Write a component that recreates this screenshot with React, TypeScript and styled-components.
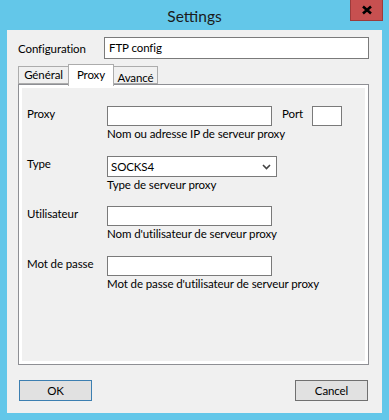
import styled, { createGlobalStyle } from 'styled-components'

const GlobalStyle = createGlobalStyle`
	html, body {
		margin: 0;
		padding: 0;
		background: #63c7e9;
	}
	* {
		box-sizing: border-box;
	}
`

const fields = [
	{ label: 'Proxy', hint: 'Nom ou adresse IP de serveur proxy', kind: 'proxy' },
	{ label: 'Type', hint: 'Type de serveur proxy', kind: 'select' },
	{ label: 'Utilisateur', hint: "Nom d'utilisateur de serveur proxy", kind: 'text' },
	{ label: 'Mot de passe', hint: "Mot de passe d'utilisateur de serveur proxy", kind: 'text' },
]

function App() {
	return (
		<>
			<GlobalStyle />
			<Window>
				<TitleBar>
					<span />
					<Title>Settings</Title>
					<CloseButton>
						<svg width="12" height="10" viewBox="0 0 12 10">
							<path d="M2 1.5 L10 8.5 M10 1.5 L2 8.5" stroke="#000" strokeWidth="2.6" />
						</svg>
					</CloseButton>
				</TitleBar>
				<Client>
					<ConfigRow>
						<Label>Configuration</Label>
						<ConfigInput>FTP config</ConfigInput>
					</ConfigRow>
					<TabStrip>
						<Tab $width={51}>Général</Tab>
						<Tab $width={46} $active>Proxy</Tab>
						<Tab $width={45} $drop>Avancé</Tab>
					</TabStrip>
					<Panel>
						{fields.map((f) => (
							<FieldRow key={f.label}>
								<FieldLabel>{f.label}</FieldLabel>
								<FieldBody>
									{f.kind === 'proxy' && (
										<InlineRow>
											<TextBox />
											<PortLabel>Port</PortLabel>
											<PortBox />
										</InlineRow>
									)}
									{f.kind === 'select' && (
										<SelectBox>
											<span>SOCKS4</span>
											<svg width="9" height="6" viewBox="0 0 9 6">
												<path d="M1 1 L4.5 4.5 L8 1" fill="none" stroke="#444" strokeWidth="1.6" />
											</svg>
										</SelectBox>
									)}
									{f.kind === 'text' && <TextBox />}
									<Hint>{f.hint}</Hint>
								</FieldBody>
							</FieldRow>
						))}
					</Panel>
					<ButtonRow>
						<Button $default>OK</Button>
						<Button>Cancel</Button>
					</ButtonRow>
				</Client>
			</Window>
		</>
	)
}

const Window = styled.div`
	width: 389px;
	height: 420px;
	display: flex;
	flex-direction: column;
	background: #63c7e9;
	font-family: Lato, 'Noto Sans', sans-serif;
	font-size: 11.5px;
	letter-spacing: -0.1px;
	color: #000;
`

const TitleBar = styled.div`
	height: 30px;
	display: grid;
	grid-template-columns: 1fr auto 1fr;
`

const Title = styled.div`
	align-self: center;
	font-size: 15.5px;
	letter-spacing: 0;
	color: #1b1b1b;
	padding-top: 1px;
`

const CloseButton = styled.div`
	justify-self: end;
	align-self: start;
	width: 33px;
	height: 21px;
	margin-right: 6px;
	background: #c75050;
	border: 1px solid #9c3b3b;
	border-top: none;
	display: grid;
	place-items: center;
`

const Client = styled.div`
	flex: 1;
	margin: 0 7px 7px 7px;
	background: #f0f0f0;
	padding: 7px 13px 0 11px;
	display: flex;
	flex-direction: column;
`

const ConfigRow = styled.div`
	display: grid;
	grid-template-columns: 86px 1fr;
	align-items: center;
	height: 22px;
`

const Label = styled.span`
	line-height: 15px;
`

const ConfigInput = styled.div`
	height: 22px;
	background: #fff;
	border: 1px solid #7a7a7a;
	padding: 0 4px;
	line-height: 20px;
`

const TabStrip = styled.div`
	margin-top: 5px;
	height: 20px;
	display: flex;
	align-items: flex-end;
	position: relative;
	z-index: 1;
`

const Tab = styled.div<{ $width: number; $active?: boolean; $drop?: boolean }>`
	width: ${({ $width }) => $width}px;
	height: ${({ $active }) => ($active ? '22px' : '18px')};
	margin-left: -1px;
	margin-bottom: ${({ $active }) => ($active ? '-2px' : '0')};
	background: ${({ $active }) => ($active ? '#fff' : '#f0f0f0')};
	border: 1px solid #acacac;
	border-bottom: ${({ $active }) => ($active ? 'none' : '1px solid #acacac')};
	text-align: center;
	line-height: 15px;
	padding-top: ${({ $active, $drop }) => ($active ? '2px' : $drop ? '3px' : '0')};
	position: relative;
	z-index: ${({ $active }) => ($active ? 2 : 1)};

	&:first-child {
		margin-left: 0;
	}
`

const Panel = styled.div`
	height: 281px;
	border: 1px solid #8e8f94;
	box-shadow: inset 0 0 0 3px #fff;
	padding: 21px 8px 0 8px;
	display: flex;
	flex-direction: column;
`

const FieldRow = styled.div`
	height: 50px;
	display: grid;
	grid-template-columns: 80px 1fr;
	align-items: start;
`

const FieldLabel = styled.span`
	line-height: 15px;
`

const FieldBody = styled.div`
	display: flex;
	flex-direction: column;
	align-items: flex-start;
`

const InlineRow = styled.div`
	display: flex;
	align-items: flex-start;
`

const TextBox = styled.div`
	width: 165px;
	height: 20px;
	background: #fff;
	border: 1px solid #7a7a7a;
`

const PortLabel = styled.span`
	line-height: 15px;
	width: 40px;
	padding-left: 10px;
`

const PortBox = styled(TextBox)`
	width: 30px;
`

const SelectBox = styled.div`
	width: 170px;
	height: 21px;
	background: #fff;
	border: 1px solid #7a7a7a;
	display: flex;
	align-items: center;
	justify-content: space-between;
	padding: 0 5px 0 3px;
	line-height: 15px;
`

const Hint = styled.span`
	line-height: 15px;
`

const ButtonRow = styled.div`
	margin-top: 15px;
	display: flex;
	justify-content: space-between;
	padding: 0 1px;
`

const Button = styled.div<{ $default?: boolean }>`
	width: 73px;
	height: 21px;
	background: #e1e1e1;
	border: 1px solid ${({ $default }) => ($default ? '#3c7fb1' : '#707070')};
	display: grid;
	place-items: center;
	line-height: 15px;
`

export default App
